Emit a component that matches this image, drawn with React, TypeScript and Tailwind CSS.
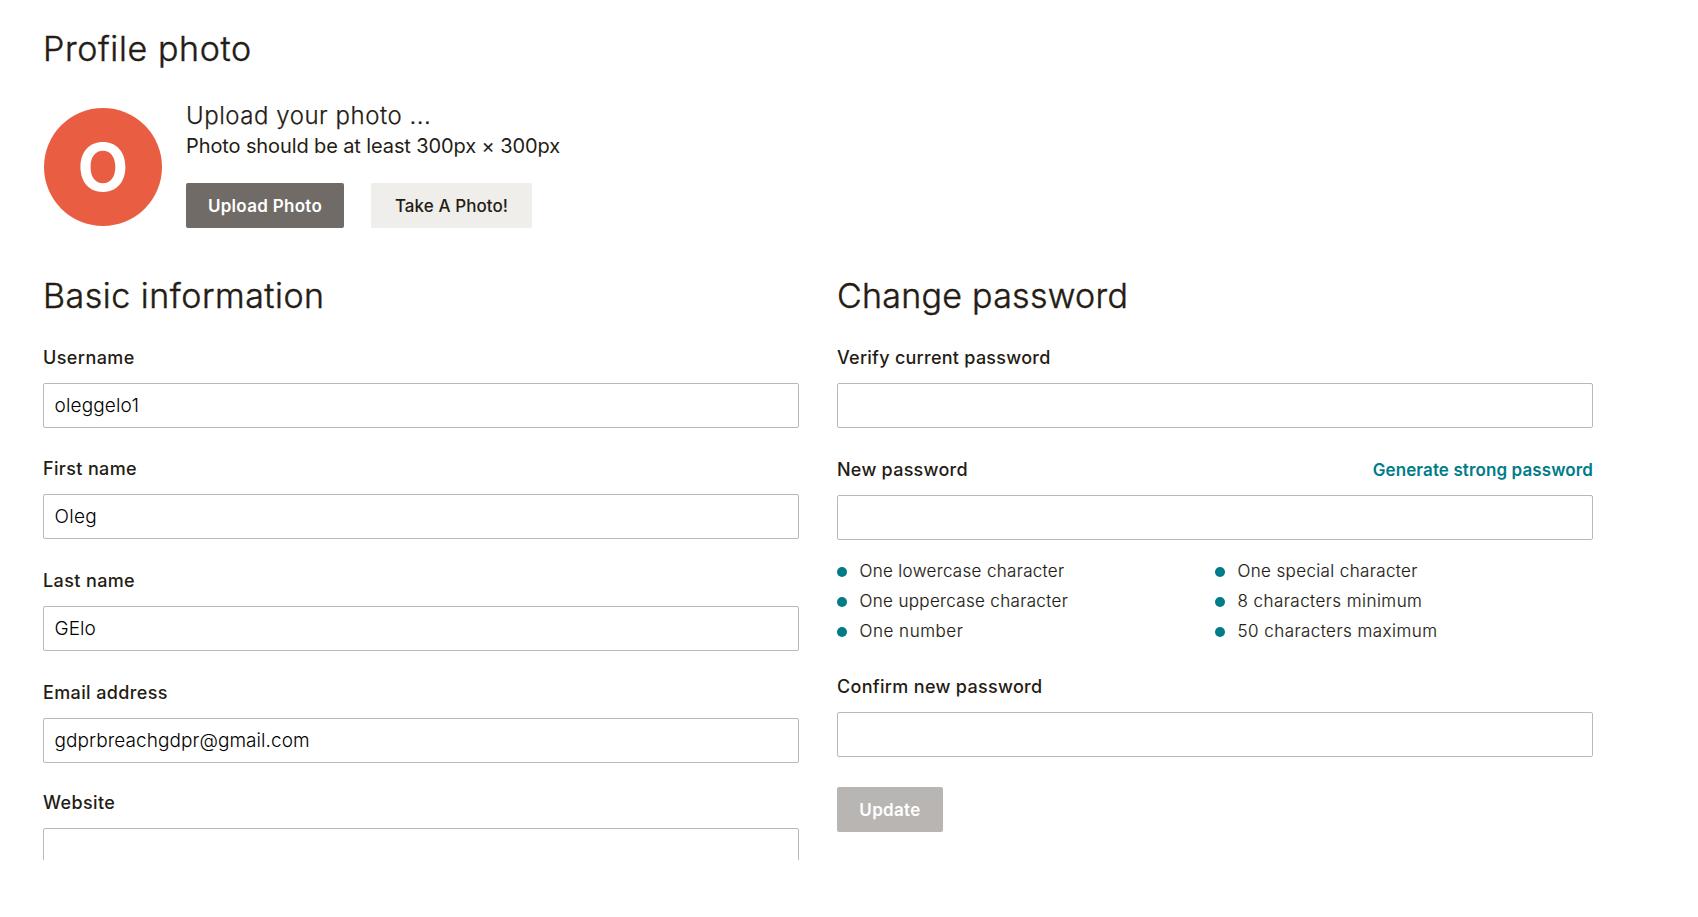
import type { ReactNode } from "react";

const heading = "h-10 text-[34px] leading-10 font-light whitespace-nowrap text-[#241c15] [-webkit-text-stroke:0.45px_#241c15]";

function Field({
  label,
  tracking,
  value = "",
  valueTracking = "",
  type = "text",
  action,
  className = "",
}: {
  label: string;
  tracking: string;
  value?: string;
  valueTracking?: string;
  type?: string;
  action?: ReactNode;
  className?: string;
}) {
  return (
    <div className={className}>
      <div className="mb-[11px] flex h-[29px] items-end justify-between">
        <label className={`text-lg leading-7 font-medium whitespace-nowrap ${tracking}`}>{label}</label>
        {action}
      </div>
      <input
        type={type}
        defaultValue={value}
        aria-label={label}
        className={`block h-[45px] w-full rounded-[2px] border border-[#b9b9b9] bg-white px-[10.5px] text-[19px] font-light text-black outline-none ${valueTracking}`}
      />
    </div>
  );
}

function Rule({ text, tracking }: { text: string; tracking: string }) {
  return (
    <li className="flex h-[30px] items-center">
      <span className="mt-0.5 mr-[12.5px] size-2.5 shrink-0 rounded-full bg-[#007c89]" />
      <span className={`text-[17px] leading-[30px] font-light whitespace-nowrap [-webkit-text-stroke:0.15px_#241c15] ${tracking}`}>{text}</span>
    </li>
  );
}

export default function App() {
  return (
    <main className="h-[860px] overflow-hidden bg-white pt-[29px] pl-[43px] font-['Inter','Liberation_Sans',sans-serif] text-[#241c15]">
      <h2 className={`${heading} tracking-[0.62px]`}>Profile photo</h2>

      <section className="flex pt-[30px]">
        <div className="mt-[9px] ml-px flex size-[118px] shrink-0 items-center justify-center rounded-full bg-[#e95d43]">
          <span className="text-[66px] leading-none font-bold text-white">O</span>
        </div>
        <div className="ml-6 pt-px">
          <p className="text-2xl leading-8 font-light tracking-[0.53px] whitespace-nowrap [-webkit-text-stroke:0.25px_#241c15]">
            Upload your photo ...
          </p>
          <p className="text-xl leading-7 tracking-[-0.11px] whitespace-nowrap">
            Photo should be at least 300px × 300px
          </p>
          <div className="mt-[23px] flex gap-[27px]">
            <button className="h-[45px] w-[158px] rounded-[2px] bg-[#706b66] pt-0.5 text-[17px] font-semibold tracking-[0.3px] whitespace-nowrap text-white">
              Upload Photo
            </button>
            <button className="h-[45px] w-[161px] rounded-[2px] bg-[#efeeea] pt-0.5 text-[17px] font-medium tracking-[0.08px] whitespace-nowrap">
              Take A Photo!
            </button>
          </div>
        </div>
      </section>

      <div className="mt-12 flex gap-[38px]">
        <section className="w-[756px]">
          <h2 className={`${heading} mb-[27px] tracking-[0.51px]`}>Basic information</h2>
          <Field label="Username" tracking="tracking-[0.42px]" value="oleggelo1" valueTracking="tracking-[0.15px]" />
          <Field className="mt-[26px]" label="First name" tracking="tracking-[0.36px]" value="Oleg" valueTracking="tracking-[0.3px]" />
          <Field className="mt-[27px]" label="Last name" tracking="tracking-[0.38px]" value="GElo" valueTracking="tracking-[0.05px]" />
          <Field
            className="mt-[27px]"
            label="Email address"
            tracking="tracking-[0.37px]"
            value="gdprbreachgdpr@gmail.com"
            valueTracking="tracking-[0.07px]"
          />
          <Field className="mt-[25px]" label="Website" tracking="tracking-[0.38px]" />
        </section>

        <section className="w-[756px]">
          <h2 className={`${heading} mb-[27px] tracking-[0.27px]`}>Change password</h2>
          <Field label="Verify current password" tracking="tracking-[0.26px]" type="password" />
          <Field
            className="mt-[27px]"
            label="New password"
            tracking="tracking-[0.25px]"
            type="password"
            action={
              <a href="#" className="text-[17px] leading-7 font-semibold tracking-[0.11px] whitespace-nowrap text-[#007c89]">
                Generate strong password
              </a>
            }
          />
          <div className="mt-4 grid grid-cols-2">
            <ul>
              <Rule text="One lowercase character" tracking="tracking-[0.32px]" />
              <Rule text="One uppercase character" tracking="tracking-[0.34px]" />
              <Rule text="One number" tracking="tracking-[0.52px]" />
            </ul>
            <ul>
              <Rule text="One special character" tracking="tracking-[0.36px]" />
              <Rule text="8 characters minimum" tracking="tracking-[0.45px]" />
              <Rule text="50 characters maximum" tracking="tracking-[0.45px]" />
            </ul>
          </div>
          <Field className="mt-[26px]" label="Confirm new password" tracking="tracking-[0.31px]" type="password" />
          <button className="mt-[30px] h-[45px] w-[106px] rounded-[2px] bg-[#b8b5b2] pt-0.5 text-[17px] font-semibold tracking-[0.33px] text-white">
            Update
          </button>
        </section>
      </div>
    </main>
  );
}
